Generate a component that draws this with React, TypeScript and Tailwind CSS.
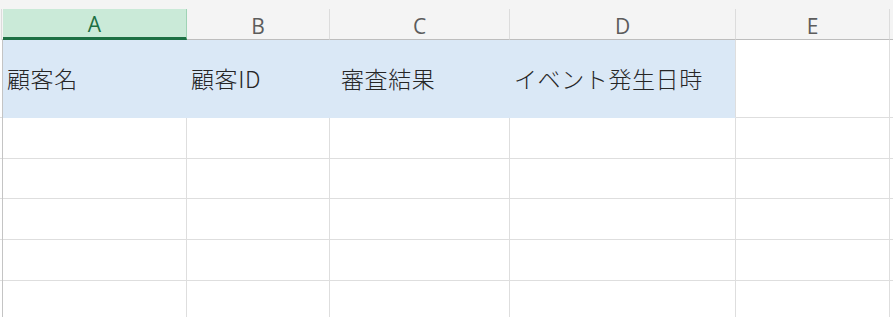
import type { ReactNode } from 'react';

type Col = { key: string; width: string; pad: string; label: string };

const columns: Col[] = [
  { key: 'A', width: 'w-[184px]', pad: 'pl-1', label: '顧客名' },
  { key: 'B', width: 'w-[143px]', pad: 'pl-1', label: '顧客ID' },
  { key: 'C', width: 'w-[180px]', pad: 'pl-[11px]', label: '審査結果' },
  { key: 'D', width: 'w-[226px]', pad: 'pl-[4px]', label: 'イベント発生日時' },
  { key: 'E', width: 'w-[154px]', pad: 'pl-1', label: '' },
];

// heights of the empty rows under the title row, border included
const bodyRows = ['h-[41px]', 'h-[40px]', 'h-[41px]', 'h-[41px]', 'h-[41px]'];

function RowStub({ className }: { className: string }) {
  return (
    <div className={`flex shrink-0 ${className}`}>
      <div className="w-[2px] border-b border-[#dedede]" />
      <div className="w-[1px] bg-[#c4c4c4]" />
    </div>
  );
}

function Row({ height, children }: { height: string; children: ReactNode }) {
  return (
    <div className={`flex ${height}`}>
      <RowStub className={height} />
      {children}
      <div className="flex-1 border-b border-[#dedede]" />
    </div>
  );
}

export default function App() {
  return (
    <div className="w-[893px] h-[317px] overflow-hidden bg-white">
      <div className="h-[9px] bg-[#f4f4f4]" />

      {/* column letters */}
      <div className="flex h-[31px] bg-[#f4f4f4] font-['Open_Sans',sans-serif] text-[21px] leading-none">
        <div className="w-[3px] shrink-0 flex">
          <div className="w-[1px]" />
          <div className="w-[1px] bg-[#dcdcdc]" />
          <div className="w-[1px] border-b border-[#bdbdbd]" />
        </div>
        {columns.map((c) =>
          c.key === 'A' ? (
            <div
              key={c.key}
              className={`${c.width} shrink-0 flex items-center justify-center bg-[#caead8] border-r border-[#9fd3b5] border-b-[3px] border-b-[#1d7044] text-[#1d7044] pt-[2px]`}
            >
              {c.key}
            </div>
          ) : (
            <div
              key={c.key}
              className={`${c.width} shrink-0 flex items-center justify-center border-r border-r-[#dcdcdc] border-b border-b-[#bdbdbd] text-[#5c5c5c] pt-[4px]`}
            >
              {c.key}
            </div>
          ),
        )}
        <div className="flex-1 border-b border-[#bdbdbd]" />
      </div>

      {/* title row */}
      <Row height="h-[78px]">
        {columns.map((c) => (
          <div
            key={c.key}
            className={`${c.width} shrink-0 flex items-center ${c.pad} font-['Noto_Sans_CJK_JP','Noto_Sans',sans-serif] font-light text-[23px] tracking-[0.6px] text-[#262626] border-r border-b border-[#dedede] ${
              c.key === 'E' ? 'bg-white' : 'bg-[#dae8f6] border-b-[#dae8f6]'
            } ${c.key === 'D' ? 'border-r-[#dedede]' : c.key === 'E' ? '' : 'border-r-[#dae8f6]'}`}
          >
            {c.label}
          </div>
        ))}
      </Row>

      {bodyRows.map((h, i) => (
        <Row key={i} height={h}>
          {columns.map((c) => (
            <div key={c.key} className={`${c.width} shrink-0 border-r border-b border-[#dedede]`} />
          ))}
        </Row>
      ))}
    </div>
  );
}
